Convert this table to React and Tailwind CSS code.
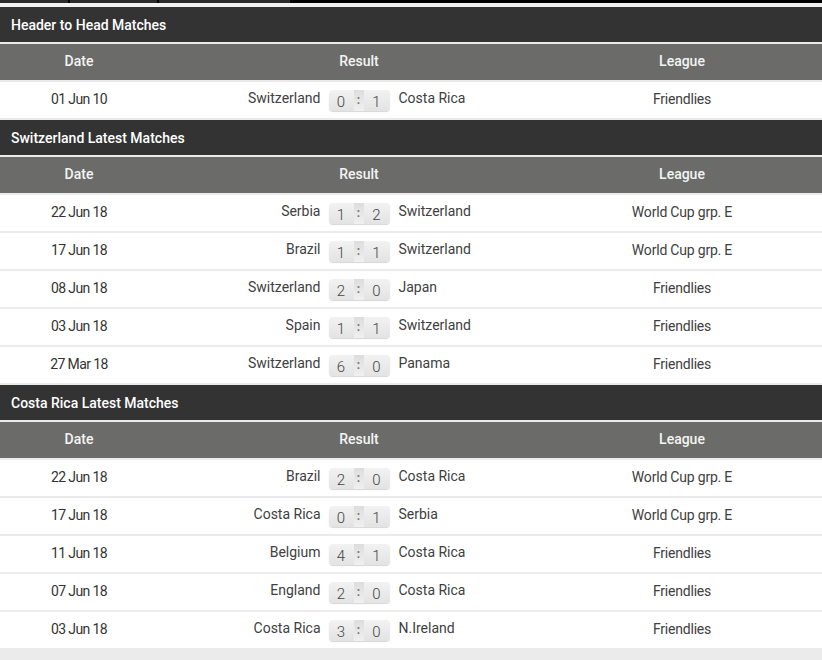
const sections = [
  {
    title: "Header to Head Matches",
    rows: [["01 Jun 10", "Switzerland", 0, 1, "Costa Rica", "Friendlies"]],
  },
  {
    title: "Switzerland Latest Matches",
    rows: [
      ["22 Jun 18", "Serbia", 1, 2, "Switzerland", "World Cup grp. E"],
      ["17 Jun 18", "Brazil", 1, 1, "Switzerland", "World Cup grp. E"],
      ["08 Jun 18", "Switzerland", 2, 0, "Japan", "Friendlies"],
      ["03 Jun 18", "Spain", 1, 1, "Switzerland", "Friendlies"],
      ["27 Mar 18", "Switzerland", 6, 0, "Panama", "Friendlies"],
    ],
  },
  {
    title: "Costa Rica Latest Matches",
    rows: [
      ["22 Jun 18", "Brazil", 2, 0, "Costa Rica", "World Cup grp. E"],
      ["17 Jun 18", "Costa Rica", 0, 1, "Serbia", "World Cup grp. E"],
      ["11 Jun 18", "Belgium", 4, 1, "Costa Rica", "Friendlies"],
      ["07 Jun 18", "England", 2, 0, "Costa Rica", "Friendlies"],
      ["03 Jun 18", "Costa Rica", 3, 0, "N.Ireland", "Friendlies"],
    ],
  },
];

const Score = ({ home, away }) => (
  <div className="flex h-[21px] items-stretch overflow-hidden rounded-[4px] bg-gradient-to-b from-[#f2f2f2] to-[#e3e3e3] text-[15px] font-light leading-[21px] text-[#444] shadow-[0_1px_1px_#d6d6d6]">
    <span className="w-[25px] pt-[2px] text-center">{home}</span>
    <span className="w-[10px] bg-gradient-to-b from-[#dddddd] to-[#f0f0f0] text-center text-[12px] font-bold text-[#777]">:</span>
    <span className="w-[26px] pt-[2px] text-center">{away}</span>
  </div>
);

const Row = ({ row }) => {
  const [date, home, hs, as, away, league] = row;
  return (
    <div className="grid h-[38px] grid-cols-[158px_402px_1fr] border-t-2 border-[#ebebeb] bg-white text-[14px] text-[#404040]">
      <div className="flex items-center justify-center pb-[1px] tracking-[-0.6px] text-[#333]">{date}</div>
      <div className="grid grid-cols-[1fr_auto_1fr] items-center gap-[8px]">
        <span className="pb-[3px] text-right">{home}</span>
        <Score home={hs} away={as} />
        <span className="pb-[3px] pl-[1px]">{away}</span>
      </div>
      <div className="flex items-center justify-center pb-[1px] pr-[18px] tracking-[-0.2px]">{league}</div>
    </div>
  );
};

const Section = ({ title, rows }) => (
  <div className="mb-[2px]">
    <div className="flex h-[35px] items-center bg-[#333333] px-[11px] pt-[2px] text-[14px] font-medium text-white">
      {title}
    </div>
    <div className="mt-[2px] grid h-[36px] grid-cols-[158px_402px_1fr] bg-[#6b6c69] text-[14px] font-medium text-[#f4f4f4]">
      <div className="flex items-center justify-center pb-[2px]">Date</div>
      <div className="flex items-center justify-center pb-[2px]">Result</div>
      <div className="flex items-center justify-center pb-[2px] pr-[18px]">League</div>
    </div>
    {rows.map((r, i) => (
      <Row key={i} row={r} />
    ))}
  </div>
);

export default function App() {
  return (
    <div className="h-[660px] w-[822px] overflow-hidden bg-[#ebebeb] font-['Roboto','Liberation_Sans',sans-serif]">
      {/* top tab strip */}
      <div className="flex h-[3px] bg-black">
        <div className="w-[68px] bg-[#2b2b2b]" />
        <div className="ml-[2px] w-[87px] bg-[#2b2b2b]" />
        <div className="ml-[2px] w-[131px] bg-[#2b2b2b]" />
      </div>
      <div className="h-[4px] bg-[#f2f2f2]" />
      {sections.map((s) => (
        <Section key={s.title} title={s.title} rows={s.rows} />
      ))}
    </div>
  );
}
